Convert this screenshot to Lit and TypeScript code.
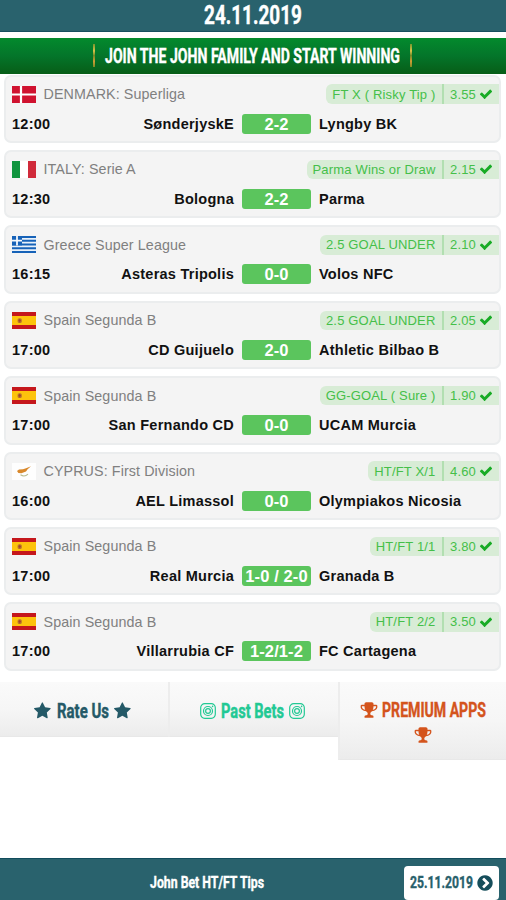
import { LitElement, html, svg, css } from "lit";
import { customElement } from "lit/decorators.js";

const ICONS = {
  star: "M1664 647q0 22-26 48l-363 354 86 500q1 7 1 20 0 21-10.5 35.5t-30.5 14.5q-19 0-40-12l-449-236-449 236q-22 12-40 12-21 0-31.5-14.5t-10.5-35.5q0-6 2-20l86-500-364-354q-25-27-25-48 0-37 56-46l502-73 225-455q19-41 49-41t49 41l225 455 502 73q56 9 56 46z",
  check: "M1671 566q0 40-28 68l-724 724-136 136q-28 28-68 28t-68-28l-136-136-362-362q-28-28-28-68t28-68l136-136q28-28 68-28t68 28l294 295 656-657q28-28 68-28t68 28l136 136q28 28 28 68z",
  next: "M845 1395l454-454q19-19 19-45t-19-45l-454-454q-19-19-45-19t-45 19l-102 102q-19 19-19 45t19 45l307 307-307 307q-19 19-19 45t19 45l102 102q19 19 45 19t45-19zm819-499q0 209-103 385.5t-279.5 279.5-385.5 103-385.5-103-279.5-279.5-103-385.5 103-385.5 279.5-279.5 385.5-103 385.5 103 279.5 279.5 103 385.5z",
  trophy: "M522 883q-74-162-74-371h-256v96q0 78 94.5 162t235.5 113zm1078-275v-96h-256q0 209-74 371 141-29 235.5-113t94.5-162zm128-128v128q0 71-41.5 143t-112 130-173 97.5-215.5 44.5q-42 54-95 95-38 34-52.5 72.5t-14.5 89.5q0 54 30.5 91t97.5 37q75 0 133.5 45.5t58.5 114.5v64q0 14-9 23t-23 9h-832q-14 0-23-9t-9-23v-64q0-69 58.5-114.5t133.5-45.5q67 0 97.5-37t30.5-91q0-51-14.5-89.5t-52.5-72.5q-53-41-95-95-113-5-215.5-44.5t-173-97.5-112-130-41.5-143v-128q0-40 28-68t68-28h288v-96q0-66 47-113t113-47h576q66 0 113 47t47 113v96h288q40 0 68 28t28 68z",
};

const icon = (name: keyof typeof ICONS) =>
  html`<svg class="icon ${name}" viewBox="0 0 1792 1792"><path d=${ICONS[name]} /></svg>`;

const camera = html`<svg class="icon camera" viewBox="0 0 16 16">
  <rect x="0.7" y="0.7" width="14.6" height="14.6" rx="4" />
  <circle cx="8" cy="8" r="4.5" /><circle cx="8" cy="8" r="2.4" />
  <circle class="dot" cx="12.6" cy="3.4" r="0.8" />
</svg>`;

/* Condensed display text, set to a fixed width on one line. */
const condensed = (text: string, width: number, size: number) => html`<svg
  class="cond" width=${width} height=${size * 1.2} viewBox="0 0 ${width} ${size * 1.2}">
  <text x="0" y=${size * 0.955} font-size=${size} textLength=${width} lengthAdjust="spacingAndGlyphs">${text}</text>
</svg>`;

const FLAGS: Record<string, unknown> = {
  dk: svg`<rect width="24" height="17" fill="#d0122f"/><path d="M9 0v17M0 8.5h24" stroke="#fff" stroke-width="2.2"/>`,
  it: svg`<rect width="8" height="17" fill="#10953f"/><rect x="8" width="8" height="17" fill="#fff"/><rect x="16" width="8" height="17" fill="#d02a3a"/>`,
  gr: svg`<rect width="24" height="17" fill="#1662b8"/><path d="M0 2.85h24M0 6.6h24M0 10.4h24M0 14.2h24" stroke="#e8f1fa" stroke-width="1.8"/><rect width="10" height="9.4" fill="#1662b8"/><path d="M5 0v9.4M0 4.7h10" stroke="#f4f8fc" stroke-width="1.8"/>`,
  es: svg`<rect width="24" height="17" fill="#c5171c"/><rect y="4" width="24" height="9" fill="#fdc30c"/><rect x="5.6" y="6.2" width="4.2" height="4.8" rx="1.6" fill="#b9752c"/><path d="M7.7 7v3.3M6.4 8.6h2.6" stroke="#a43a2c" stroke-width="0.8"/>`,
  cy: svg`<rect width="24" height="17" fill="#fefefe"/><path d="M5 8.1L7 6.4l4-.2 3-1 5-2-3.4 3-1.6 2.3-4.6 1.8-3-.2z" fill="#d9882b"/><path d="M8.5 11.8q4 2.6 7.5-.6" stroke="#b9bd91" stroke-width="1.1" fill="none"/>`,
};

interface Match {
  flag: string; league: string; tip: string; odds: string;
  time: string; home: string; score: string; away: string;
}

const m = (flag: string, league: string, tip: string, odds: string, time: string, home: string, score: string, away: string): Match =>
  ({ flag, league, tip, odds, time, home, score, away });

const MATCHES: Match[] = [
  m("dk", "DENMARK: Superliga", "FT X ( Risky Tip )", "3.55", "12:00", "SønderjyskE", "2-2", "Lyngby BK"),
  m("it", "ITALY: Serie A", "Parma Wins or Draw", "2.15", "12:30", "Bologna", "2-2", "Parma"),
  m("gr", "Greece Super League", "2.5 GOAL UNDER", "2.10", "16:15", "Asteras Tripolis", "0-0", "Volos NFC"),
  m("es", "Spain Segunda B", "2.5 GOAL UNDER", "2.05", "17:00", "CD Guijuelo", "2-0", "Athletic Bilbao B"),
  m("es", "Spain Segunda B", "GG-GOAL ( Sure )", "1.90", "17:00", "San Fernando CD", "0-0", "UCAM Murcia"),
  m("cy", "CYPRUS: First Division", "HT/FT X/1", "4.60", "16:00", "AEL Limassol", "0-0", "Olympiakos Nicosia"),
  m("es", "Spain Segunda B", "HT/FT 1/1", "3.80", "17:00", "Real Murcia", "1-0 / 2-0", "Granada B"),
  m("es", "Spain Segunda B", "HT/FT 2/2", "3.50", "17:00", "Villarrubia CF", "1-2/1-2", "FC Cartagena"),
];

@customElement("app-root")
export class AppRoot extends LitElement {
  static styles = css`
    :host {
      display: flex;
      flex-direction: column;
      height: 900px;
      background: #fff;
      font-family: "Liberation Sans", Arial, sans-serif;
      overflow: hidden;
    }
    * { box-sizing: border-box; }
    svg { display: block; flex: none; }
    .cond { overflow: visible; }
    .cond text {
      font-family: Roboto, "Liberation Sans", sans-serif;
      font-weight: 700;
      fill: currentColor;
      stroke: currentColor;
      stroke-width: 0.4px;
    }
    header {
      height: 32px;
      flex: none;
      display: flex;
      justify-content: center;
      background: #29626d;
      border-bottom: 1px solid #164f60;
      color: #fff;
    }
    .banner {
      height: 36px;
      flex: none;
      margin-top: 6px;
      padding: 0 2px 1.5px 0;
      display: flex;
      align-items: center;
      justify-content: center;
      gap: 10px;
      background: linear-gradient(#038a2d, #04752a 50%, #075d17);
      color: #fff;
    }
    .bar {
      width: 2px;
      height: 23px;
      background: linear-gradient(#75952c, #d7c24a 30%, #6f8a26 50%, #cf9c35 75%, #7b8a25);
    }
    .list {
      flex: none;
      display: flex;
      flex-direction: column;
      gap: 7px;
      padding: 0 5px 0 4px;
      margin-top: 0.6px;
    }
    .card {
      height: 68.4px;
      padding: 8px 0 0 6px;
      background: #f4f4f4;
      border: 2px solid #ebedee;
      border-radius: 7px;
    }
    .top {
      height: 19px;
      display: flex;
      align-items: center;
    }
    .flag { width: 24px; height: 17px; }
    .league {
      margin-left: 7.5px;
      flex: 1;
      font-size: 14.3px;
      letter-spacing: 0.1px;
      color: #808080;
      white-space: nowrap;
    }
    .pill {
      height: 19.5px;
      display: flex;
      align-items: center;
      padding-left: 6px;
      border-radius: 6px 0 0 6px;
      background: #d8ecd6;
      color: #45bf49;
      font-size: 13px;
      letter-spacing: 0.17px;
      white-space: nowrap;
    }
    .odds {
      width: 57px;
      height: 100%;
      margin-left: 6.5px;
      padding-left: 6px;
      display: flex;
      align-items: center;
      justify-content: space-between;
      padding-right: 6px;
      border-left: 2px solid #b2dfb1;
    }
    .icon { fill: currentColor; }
    .check { width: 14px; height: 14px; color: #18ab25; }
    .row {
      margin-top: 10px;
      height: 20px;
      display: grid;
      grid-template-columns: 60px 162px 69px 1fr;
      align-items: center;
      font-size: 14.5px;
      font-weight: 700;
      letter-spacing: 0.25px;
      color: #111;
      white-space: nowrap;
    }
    .home { text-align: right; }
    .score {
      margin-left: 8px;
      width: 69px;
      height: 20px;
      line-height: 20px;
      text-align: center;
      border-radius: 3px;
      background: #5bc55d;
      color: #fff;
      font-size: 16.5px;
      letter-spacing: 0.1px;
    }
    .away { margin-left: 16px; }
    .tabs {
      flex: none;
      display: grid;
      grid-template-columns: 168px 170px 168px;
      align-items: start;
      margin-top: 11.4px;
    }
    .tab {
      min-height: 54px;
      padding: 17px 8px 13px;
      display: flex;
      flex-wrap: wrap;
      align-items: center;
      justify-content: center;
      gap: 5px;
      background: linear-gradient(#fafafa, #f6f6f6 50%, #ececec);
      border-bottom: 1px solid #e8e8e8;
    }
    .tab + .tab { border-left: 2px solid #ededed; }
    .rate { color: #245967; padding-right: 11px; }
    .past { color: #22c994; padding-right: 11px; }
    .premium {
      height: 78px;
      align-content: flex-start;
      color: #d4541c;
      padding: 16px 16px 0;
      gap: 4px;
    }
    .tab .icon { width: 18px; height: 18px; }
    .tab .camera { width: 16px; height: 16px; fill: none; stroke: currentColor; stroke-width: 1.2; }
    .camera .dot { fill: currentColor; stroke: none; }
    footer {
      height: 42px;
      flex: none;
      margin-top: auto;
      display: grid;
      grid-template-columns: 1fr auto;
      align-items: center;
      padding: 6px 7px 0 150px;
      background: #29626d;
      border-top: 1px solid #124c5c;
      color: #fff;
    }
    .date {
      width: 95px;
      height: 34px;
      display: flex;
      align-items: center;
      gap: 3px;
      padding-left: 6px;
      border-radius: 4px;
      background: #fff;
      color: #28606b;
    }
    .next { width: 18px; height: 18px; color: #164e5b; }
  `;

  private card(x: Match) {
    return html`<article class="card">
      <div class="top">
        <svg class="flag" viewBox="0 0 24 17">${FLAGS[x.flag]}</svg>
        <span class="league">${x.league}</span>
        <span class="pill">${x.tip}<span class="odds">${x.odds}${icon("check")}</span></span>
      </div>
      <div class="row">
        <span>${x.time}</span>
        <span class="home">${x.home}</span>
        <span class="score">${x.score}</span>
        <span class="away">${x.away}</span>
      </div>
    </article>`;
  }

  render() {
    return html`
      <header>${condensed("24.11.2019", 98, 25)}</header>
      <div class="banner">
        <span class="bar"></span>
        ${condensed("JOIN THE JOHN FAMILY AND START WINNING", 295, 20.5)}
        <span class="bar"></span>
      </div>
      <main class="list">${MATCHES.map((x) => this.card(x))}</main>
      <nav class="tabs">
        <div class="tab rate">${icon("star")}${condensed("Rate Us", 52, 19.5)}${icon("star")}</div>
        <div class="tab past">${camera}${condensed("Past Bets", 63, 19.5)}${camera}</div>
        <div class="tab premium">${icon("trophy")}${condensed("PREMIUM APPS", 104, 19.5)}${icon("trophy")}</div>
      </nav>
      <footer>
        ${condensed("John Bet HT/FT Tips", 114, 17)}
        <div class="date">${condensed("25.11.2019", 63, 17)}${icon("next")}</div>
      </footer>
    `;
  }
}
